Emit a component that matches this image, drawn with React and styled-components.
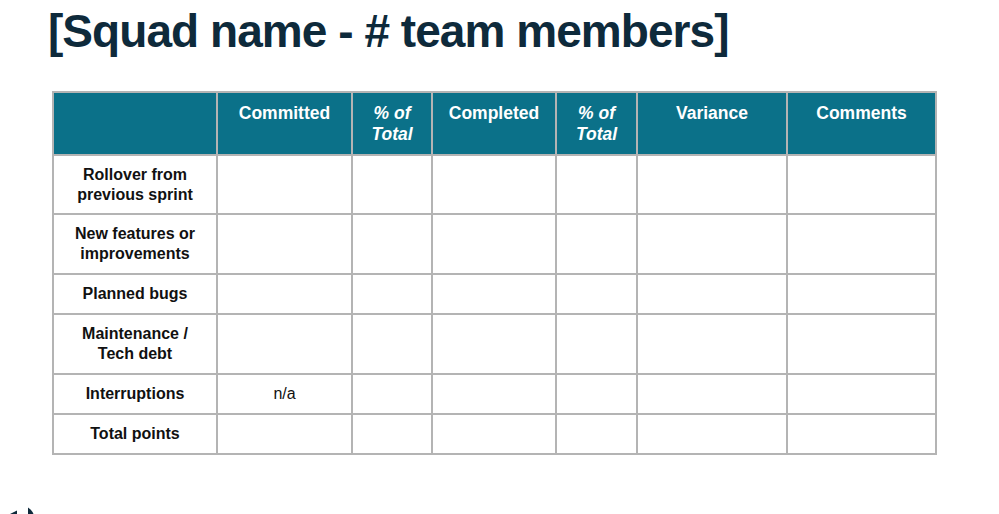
import React from 'react';
import styled, { createGlobalStyle } from 'styled-components';

const GlobalStyle = createGlobalStyle`
  html, body {
    margin: 0;
    padding: 0;
    background: #ffffff;
  }
  body {
    font-family: 'Liberation Sans', Arial, sans-serif;
  }
`;

const Page = styled.div`
  width: 999px;
  height: 514px;
  overflow: hidden;
  display: flex;
  flex-direction: column;
  padding: 0 0 0 48px;
  box-sizing: border-box;
`;

const Title = styled.h1`
  margin: 5px 0 0 0;
  font-size: 46px;
  line-height: 52px;
  font-weight: 700;
  letter-spacing: -0.95px;
  color: #0e2a3b;
`;

const Grid = styled.table`
  margin: 34px 0 0 4px;
  border-collapse: collapse;
  table-layout: fixed;
  width: 885px;
`;

const Col = styled.col`
  width: ${(p) => p.w}px;
`;

const HeadCell = styled.th`
  background: #0b7189;
  color: #ffffff;
  border: 2px solid #b4b4b4;
  height: 63px;
  padding: 10px 6px 0;
  box-sizing: border-box;
  vertical-align: top;
  font-size: 17.5px;
  line-height: 21px;
  font-weight: 700;
  font-style: ${(p) => (p.italic ? 'italic' : 'normal')};
  text-align: center;
`;

const LabelCell = styled.td`
  border: 2px solid #b4b4b4;
  height: ${(p) => p.h}px;
  padding: 0 4px;
  box-sizing: border-box;
  font-size: 16px;
  line-height: 20px;
  font-weight: 700;
  color: #111111;
  text-align: center;
  vertical-align: middle;
`;

const Cell = styled.td`
  border: 2px solid #b4b4b4;
  padding: 0 4px;
  font-size: 16px;
  color: #111111;
  text-align: center;
  vertical-align: middle;
`;

const Footer = styled.div`
  margin-top: auto;
  margin-left: -48px;
  height: 8px;
  overflow: hidden;
`;

const LogoEdge = styled.svg`
  display: block;
`;

const widths = [164, 135, 80, 124, 81, 150, 149];

const headers = [
  { label: '' },
  { label: 'Committed' },
  { label: ['% of', 'Total'], italic: true },
  { label: 'Completed' },
  { label: ['% of', 'Total'], italic: true },
  { label: 'Variance' },
  { label: 'Comments' },
];

const rows = [
  { label: ['Rollover from', 'previous sprint'], h: 59 },
  { label: ['New features or', 'improvements'], h: 60 },
  { label: ['Planned bugs'], h: 40 },
  { label: ['Maintenance /', 'Tech debt'], h: 60 },
  { label: ['Interruptions'], h: 40, committed: 'n/a' },
  { label: ['Total points'], h: 40 },
];

const Lines = ({ text }) => {
  const parts = Array.isArray(text) ? text : [text];
  return parts.map((t, i) => (
    <React.Fragment key={i}>
      {i > 0 && <br />}
      {t}
    </React.Fragment>
  ));
};

const App = () => {
  return (
    <Page>
      <GlobalStyle />
      <Title>[Squad name - # team members]</Title>
      <Grid>
        <colgroup>
          {widths.map((w, i) => (
            <Col key={i} w={w} />
          ))}
        </colgroup>
        <thead>
          <tr>
            {headers.map((h, i) => (
              <HeadCell key={i} italic={h.italic}>
                <Lines text={h.label} />
              </HeadCell>
            ))}
          </tr>
        </thead>
        <tbody>
          {rows.map((r, i) => (
            <tr key={i}>
              <LabelCell h={r.h}>
                <Lines text={r.label} />
              </LabelCell>
              <Cell>{r.committed || ''}</Cell>
              <Cell />
              <Cell />
              <Cell />
              <Cell />
              <Cell />
            </tr>
          ))}
        </tbody>
      </Grid>
      <Footer>
        {/* top edge of the logo, cut off by the slide */}
        <LogoEdge width="40" height="8" viewBox="0 0 40 8">
          <path d="M10 8 L17 4.5 L17 8 Z" fill="#0e2a3b" />
          <path d="M28 1.5 C30.5 3 32.5 5.5 33.5 8 L28 8 Z" fill="#0e2a3b" />
        </LogoEdge>
      </Footer>
    </Page>
  );
};

export default App;
